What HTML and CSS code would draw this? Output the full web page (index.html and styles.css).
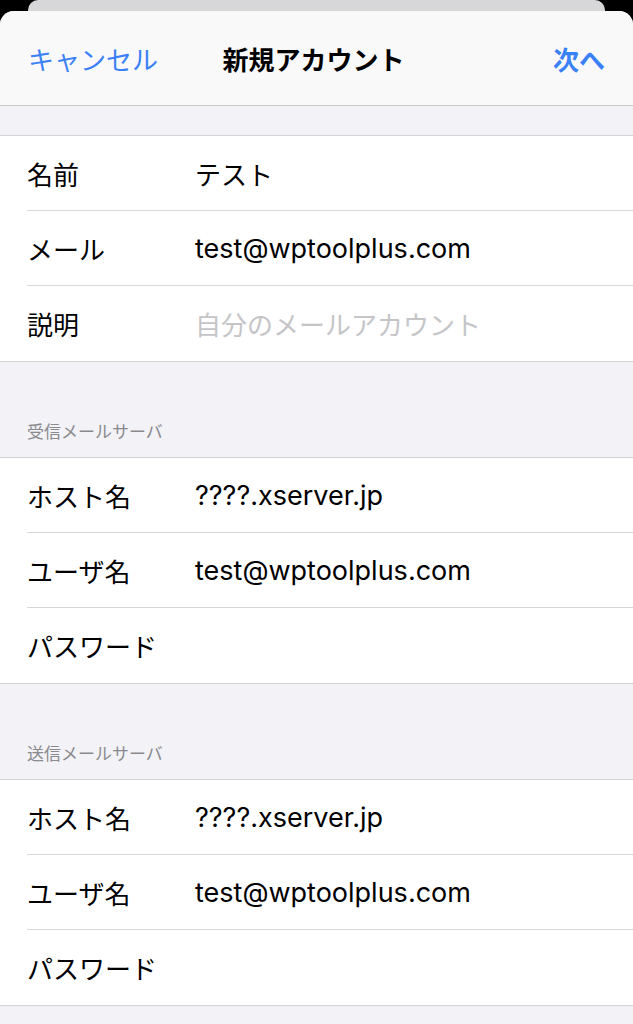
FILE: index.html
```html
<html>
  <head>
    <meta charset="utf-8">
    <link rel="stylesheet" href="styles.css">
  </head>
  <body>
    <div class="behind"></div>
    <div class="sheet">
      <div class="nav">
        <span class="nav-cancel">キャンセル</span>
        <span class="nav-title">新規アカウント</span>
        <span class="nav-next">次へ</span>
      </div>

      <div class="gap"></div>
      <div class="group">
        <div class="row"><span class="label">名前</span><span class="value">テスト</span></div>
        <div class="row"><span class="label">メール</span><span class="value latin">test@wptoolplus.com</span></div>
        <div class="row"><span class="label">説明</span><span class="value placeholder">自分のメールアカウント</span></div>
      </div>

      <div class="section-heading">受信メールサーバ</div>
      <div class="group">
        <div class="row"><span class="label">ホスト名</span><span class="value latin">????.xserver.jp</span></div>
        <div class="row"><span class="label">ユーザ名</span><span class="value latin">test@wptoolplus.com</span></div>
        <div class="row"><span class="label">パスワード</span><span class="value"></span></div>
      </div>

      <div class="section-heading">送信メールサーバ</div>
      <div class="group">
        <div class="row"><span class="label">ホスト名</span><span class="value latin">????.xserver.jp</span></div>
        <div class="row"><span class="label">ユーザ名</span><span class="value latin">test@wptoolplus.com</span></div>
        <div class="row"><span class="label">パスワード</span><span class="value"></span></div>
      </div>
      <div class="gap"></div>
    </div>
  </body>
</html>
```

FILE: styles.css
```css
body{
  margin: 0;
  background: #000;
  font-family: Inter, "Noto Sans CJK JP", sans-serif;
  color: #000;
}
.behind{
  height: 11px;
  margin: 0 28px;
  background: #d7d7d9;
  border-radius: 10px 10px 0 0;
}
.sheet{
  background: #f2f2f7;
  border-radius: 14px 14px 0 0;
  overflow: hidden;
}
.nav{
  height: 95px;
  box-sizing: border-box;
  background: #f9f9f9;
  border-bottom: 1px solid #c9c9cc;
  display: grid;
  grid-template-columns: 1fr auto 1fr;
  align-items: center;
  padding: 0 28px;
  font-size: 26px;
}
.nav-cancel{
  color: #3a80f6;
}
.nav-title{
  font-weight: bold;
  margin-left: -6px;
}
.nav-next{
  color: #3a80f6;
  font-weight: 600;
  justify-self: end;
}
.gap{
  height: 29px;
}
.group{
  background: #fff;
  border-top: 1px solid #d3d3d6;
  border-bottom: 1px solid #d3d3d6;
  padding-left: 27px;
}
.row{
  height: 75px;
  box-sizing: border-box;
  display: flex;
  align-items: center;
  border-bottom: 1px solid #d8d8db;
  font-size: 26px;
}
.row:last-child{
  border-bottom: none;
}
.label{
  width: 168px;
  flex-shrink: 0;
}
.value.latin{
  font-size: 27px;
}
.placeholder{
  color: #c5c5c8;
}
.section-heading{
  height: 95px;
  box-sizing: border-box;
  display: flex;
  align-items: flex-end;
  padding: 0 27px 14px;
  font-size: 17px;
  color: #8a8a8e;
}
```
